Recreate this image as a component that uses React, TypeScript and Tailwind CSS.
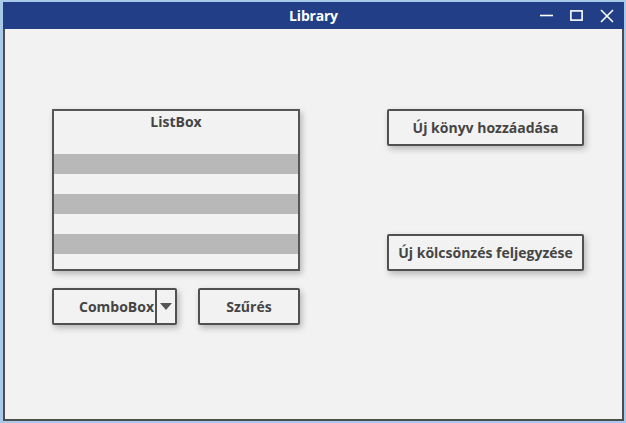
import React from "react";

const font = { fontFamily: "'Open Sans', 'Noto Sans', sans-serif" };

function Btn({ label, className }: { label: string; className?: string }) {
  return (
    <div
      className={`flex h-[37px] items-center justify-center rounded-[2px] border-2 border-[#505050] bg-[#f2f2f2] text-[14px] font-bold text-[#454545] shadow-[2px_3px_6px_rgba(0,0,0,0.25)] ${className ?? ""}`}
    >
      {label}
    </div>
  );
}

export default function App() {
  return (
    <div className="h-[423px] w-[626px] bg-[#a8c9ea] pl-[3px] pr-[2px] pt-[2px]" style={font}>
      <div className="flex h-[419px] w-[621px] flex-col">
        {/* title bar */}
        <div className="relative flex h-[27px] items-center justify-center bg-[#213e86] text-[14px] font-bold tracking-[-0.2px] text-white">
          Library
          <div className="absolute right-[10px] top-0 flex h-full items-center gap-[17px]">
            <svg width="13" height="13" viewBox="0 0 13 13">
              <path d="M0 6.5h13" stroke="#fff" strokeWidth="1.6" />
            </svg>
            <svg width="13" height="13" viewBox="0 0 13 13">
              <rect x="0.9" y="1.9" width="11.2" height="9.2" fill="none" stroke="#fff" strokeWidth="1.6" />
            </svg>
            <svg width="14" height="14" viewBox="0 0 14 14">
              <path d="M1 1l12 12M13 1L1 13" stroke="#fff" strokeWidth="1.6" />
            </svg>
          </div>
        </div>

        {/* body */}
        <div className="flex flex-1 gap-[87px] border-x-2 border-b-2 border-[#4d4d4d] bg-[#f2f2f2] pl-[47px] pt-[80px]">
          <div className="flex w-[248px] flex-col gap-[17px]">
            <div className="flex h-[162px] flex-col border-2 border-[#555] bg-[#f2f2f2] shadow-[2px_3px_6px_rgba(0,0,0,0.25)]">
              <div className="h-[43px] text-center text-[14px] font-bold text-[#454545]">ListBox</div>
              <div className="h-[20px] bg-[#b8b8b8]" />
              <div className="h-[20px]" />
              <div className="h-[20px] bg-[#b8b8b8]" />
              <div className="h-[20px]" />
              <div className="h-[20px] bg-[#b8b8b8]" />
            </div>
            <div className="flex gap-[21px]">
              <div className="flex h-[37px] w-[125px] rounded-[2px] border-2 border-[#505050] bg-[#f2f2f2] text-[14px] font-bold text-[#454545] shadow-[2px_3px_6px_rgba(0,0,0,0.25)]">
                <div className="flex flex-1 items-center justify-end pr-[1px]">ComboBox</div>
                <div className="flex w-[20px] items-center justify-center border-l-2 border-[#505050]">
                  <svg width="12" height="7" viewBox="0 0 12 7">
                    <path d="M0 0h12L6 7z" fill="#555" />
                  </svg>
                </div>
              </div>
              <Btn label="Szűrés" className="w-[102px]" />
            </div>
          </div>
          <div className="flex w-[197px] flex-col gap-[88px]">
            <Btn label="Új könyv hozzáadása" />
            <Btn label="Új kölcsönzés feljegyzése" />
          </div>
        </div>
      </div>
    </div>
  );
}
